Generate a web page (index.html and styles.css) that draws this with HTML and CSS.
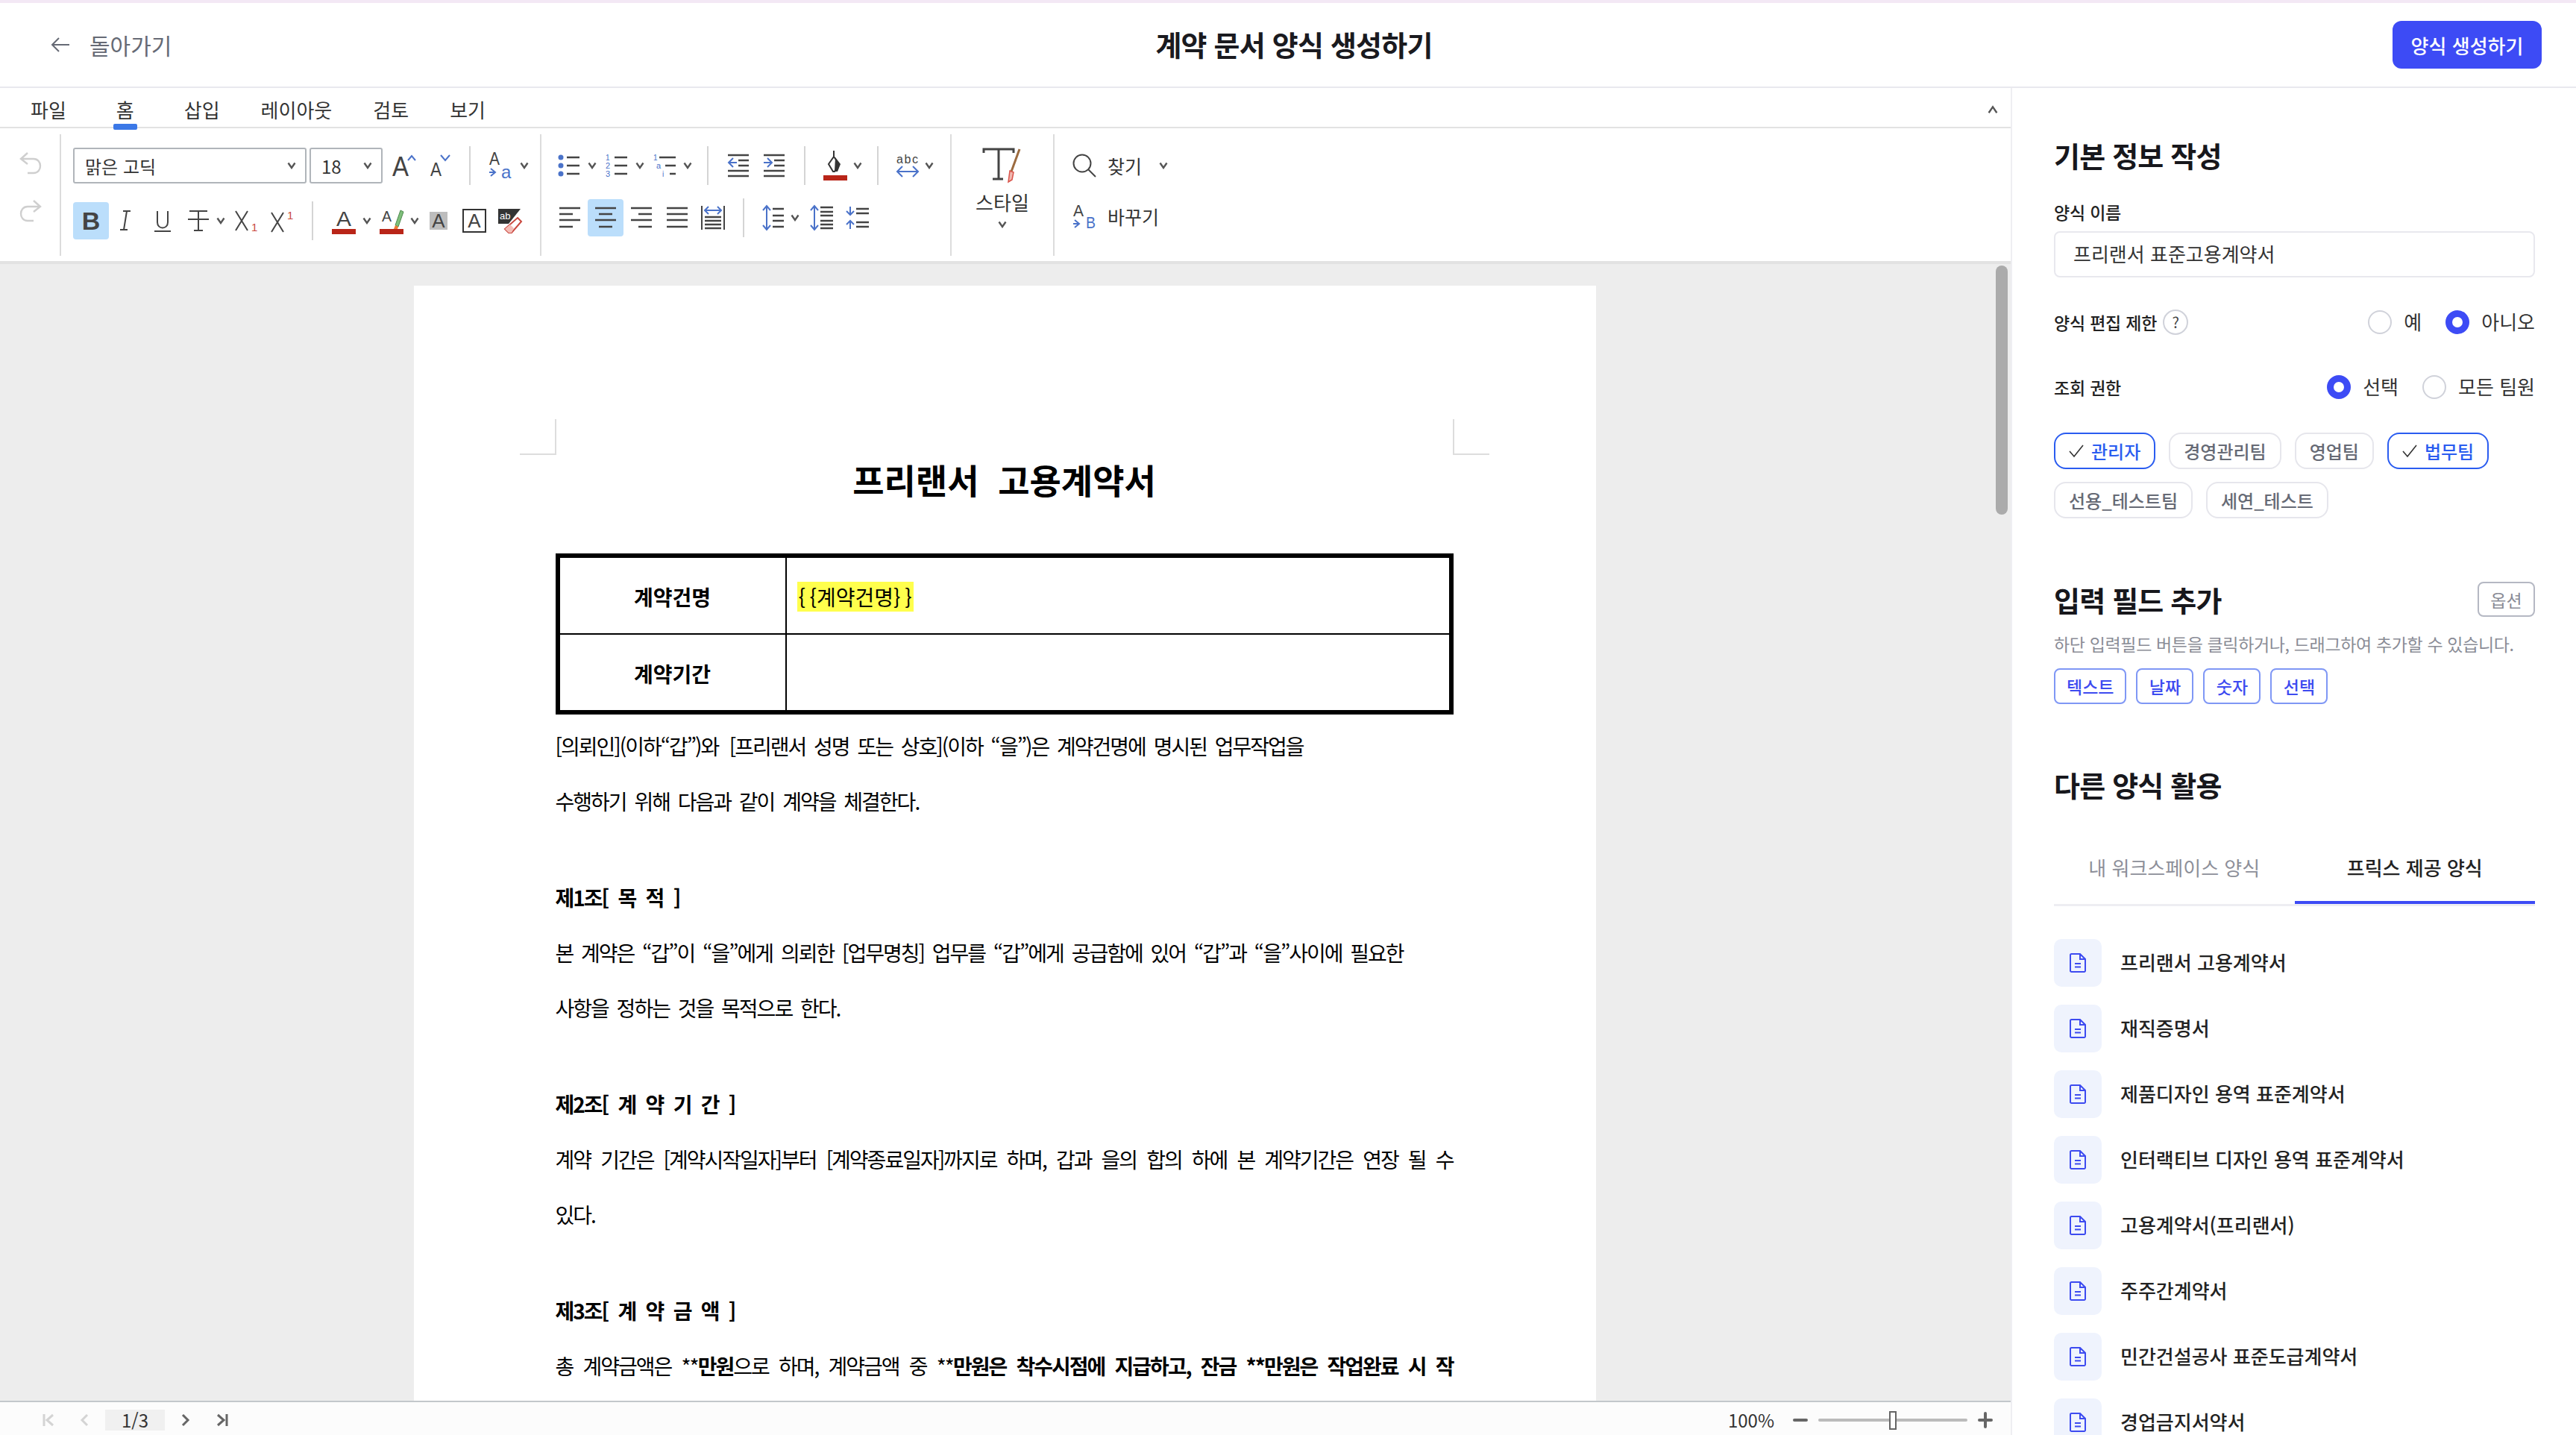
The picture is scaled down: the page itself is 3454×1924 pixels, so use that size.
FILE: index.html
```html
<!DOCTYPE html>
<html lang="ko">
	<head>
		<meta charset="utf-8">
		<title>계약 문서 양식 생성하기</title>
		<link rel="stylesheet" href="styles.css">
	</head>
	<body>
		<svg class="sprite" width="0" height="0">
			<symbol id="chev" viewBox="0 0 12 10"><path d="M1.5 1.5 6 8l4.5-6.5" fill="none" stroke="#555" stroke-width="2.4"/></symbol>
			<symbol id="doc" viewBox="0 0 22 26"><path d="M2.5 1H14l7 7v15.5a1.5 1.5 0 0 1-1.500 1.500H2.500A1.500 1.500 0 0 1 1 23.500V2.500A1.500 1.500 0 0 1 2.500 1ZM14 1v7h7M7 14h8M7 18.500h8" fill="none" stroke="#3d4bf0" stroke-width="2"/></symbol>
			<symbol id="check" viewBox="0 0 20 20"><path d="M1 10l6 7L19 2" fill="none" stroke="#333" stroke-width="1.600"/></symbol>
		</svg>

		<header class="top">
			<a class="back" href="#">
				<svg width="26" height="22" viewBox="0 0 26 22"><path d="M11 2 2 11l9 9M2 11h23" fill="none" stroke="#666a75" stroke-width="2"/></svg>
				<span>돌아가기</span>
			</a>
			<h1>계약 문서 양식 생성하기</h1>
			<div class="top-right"><button class="primary">양식 생성하기</button></div>
		</header>

		<div class="main">
			<div class="editor">
				<nav class="ribbon-tabs">
					<a href="#">파일</a>
					<a href="#" class="active">홈</a>
					<a href="#">삽입</a>
					<a href="#">레이아웃</a>
					<a href="#">검토</a>
					<a href="#">보기</a>
					<svg class="collapse" width="16" height="12" viewBox="0 0 12 10"><path d="M1.500 8.500 6 2l4.500 6.500" fill="none" stroke="#555" stroke-width="2"/></svg>
				</nav>

				<div class="toolbar">
					<div class="group group-history">
						<svg width="30" height="30" viewBox="0 0 30 30"><path d="M11 1 2 9l9 7M2 9h17c12 0 12 19 0 19h-8" fill="none" stroke="#cfcfcf" stroke-width="2.400"/></svg>
						<svg width="30" height="30" viewBox="0 0 30 30"><path d="M19 1l9 8-9 7M28 9H11C-1 9-1 28 11 28h8" fill="none" stroke="#cfcfcf" stroke-width="2.400"/></svg>
					</div>

					<div class="group group-font">
						<div class="row">
							<div class="select select-font"><span>맑은 고딕</span><svg width="12" height="10"><use href="#chev"/></svg></div>
							<div class="select select-size"><span>18</span><svg width="12" height="10"><use href="#chev"/></svg></div>
							<button class="btn"><svg width="32" height="32" viewBox="0 0 32 32"><text x="1" y="30" class="ico-a" font-size="36" textLength="22" lengthAdjust="spacingAndGlyphs">A</text><path d="M22 9l5-6 5 6" fill="none" stroke="#4a72c9" stroke-width="2"/></svg></button>
							<button class="btn"><svg width="32" height="32" viewBox="0 0 32 32"><text x="4" y="30" class="ico-a" font-size="25" textLength="15" lengthAdjust="spacingAndGlyphs">A</text><path d="M18 2l6 7 6-7" fill="none" stroke="#4a72c9" stroke-width="2"/></svg></button>
							<i class="sep"></i>
							<button class="btn split"><svg width="34" height="40" viewBox="0 0 34 40"><text x="1" y="19" class="ico-a" font-size="24" textLength="14" lengthAdjust="spacingAndGlyphs">A</text><text x="17" y="37" class="ico-blue" font-size="24">a</text><path d="M3 24l6 5-6 5M1 29h8" fill="none" stroke="#4a72c9" stroke-width="2"/></svg><svg width="12" height="10"><use href="#chev"/></svg></button>
						</div>
						<div class="row row-b">
							<button class="btn on"><b class="bold-b">B</b></button>
							<button class="btn"><svg width="32" height="32" viewBox="0 0 32 32"><path d="M11 3h10M16 3l-4 25M7 28h10" fill="none" stroke="#444" stroke-width="2"/></svg></button>
							<button class="btn"><svg width="32" height="32" viewBox="0 0 32 32"><path d="M9 3v15c0 10 14 10 14 0V3M5 30h22" fill="none" stroke="#444" stroke-width="2"/></svg></button>
							<button class="btn split"><svg width="32" height="32" viewBox="0 0 32 32"><path d="M4 3h24M16 3v26M2 14h28M10 29h12" fill="none" stroke="#444" stroke-width="2"/></svg><svg width="12" height="10"><use href="#chev"/></svg></button>
							<button class="btn"><svg width="32" height="32" viewBox="0 0 32 32"><path d="M2 3l16 26M18 3 2 29" fill="none" stroke="#444" stroke-width="2"/><text x="23" y="30" class="ico-red" font-size="15">1</text></svg></button>
							<button class="btn"><svg width="32" height="32" viewBox="0 0 32 32"><path d="M2 5l16 26M18 5 2 31" fill="none" stroke="#444" stroke-width="2"/><text x="23" y="14" class="ico-red" font-size="15">1</text></svg></button>
							<i class="sep"></i>
							<button class="btn split"><svg width="34" height="36" viewBox="0 0 34 36"><text x="7" y="25" class="ico-a" font-size="28" textLength="20" lengthAdjust="spacingAndGlyphs">A</text><rect x="1" y="29" width="32" height="7" fill="#b92518"/></svg><svg width="12" height="10"><use href="#chev"/></svg></button>
							<button class="btn split"><svg width="34" height="36" viewBox="0 0 34 36"><text x="4" y="19" class="ico-a" font-size="20" textLength="13" lengthAdjust="spacingAndGlyphs">A</text><path d="M22 24l7-20 4 2-7 20z" fill="#7fbf7b" stroke="#4d8a4d"/><path d="M20 29l2-5 4 2-1 3z" fill="#ee7a33"/><rect x="1" y="29" width="32" height="7" fill="#b92518"/></svg><svg width="12" height="10"><use href="#chev"/></svg></button>
							<button class="btn"><span class="shade-a">A</span></button>
							<button class="btn"><span class="box-a">A</span></button>
							<button class="btn"><svg width="32" height="32" viewBox="0 0 32 32"><path d="M0 0h30L14 20H0z" fill="#333"/><text x="2" y="14" class="ico-white" font-size="13">ab</text><path d="M26 12l5 5-13 15h-4l-5-5z" fill="#fff" stroke="#c9483f" stroke-width="2"/><path d="M16 21l5 5-3 6h-4l-5-5z" fill="#f3bcb6"/></svg></button>
						</div>
					</div>

					<div class="group group-para">
						<div class="row">
							<button class="btn split"><svg width="32" height="32" viewBox="0 0 32 32"><g fill="#4a72c9"><circle cx="4" cy="5" r="3.500"/><circle cx="4" cy="16" r="3.500"/><circle cx="4" cy="27" r="3.500"/></g><path d="M12 5h17M12 16h17M12 27h17" stroke="#444" stroke-width="2.400"/></svg><svg width="12" height="10"><use href="#chev"/></svg></button>
							<button class="btn split"><svg width="32" height="34" viewBox="0 0 32 34"><text x="0" y="10" class="ico-blue" font-size="10">1</text><text x="0" y="21" class="ico-blue" font-size="11">2</text><text x="0" y="32" class="ico-blue" font-size="11">3</text><path d="M12 6h17M12 17h17M12 28h17" stroke="#444" stroke-width="2.400"/></svg><svg width="12" height="10"><use href="#chev"/></svg></button>
							<button class="btn split"><svg width="32" height="34" viewBox="0 0 32 34"><text x="0" y="10" class="ico-blue" font-size="10">1</text><text x="4" y="21" class="ico-blue" font-size="11">a</text><text x="12" y="32" class="ico-blue" font-size="10">i</text><path d="M8 6h22M16 17h14M22 28h8" stroke="#444" stroke-width="2.400"/></svg><svg width="12" height="10"><use href="#chev"/></svg></button>
							<i class="sep"></i>
							<button class="btn"><svg width="30" height="32" viewBox="0 0 30 32"><path d="M1 2h28M1 30h28M1 23h28M15 9h14M15 16h14" stroke="#444" stroke-width="2.400"/><path d="M8 6l-6 6 6 6M2 12h11" fill="none" stroke="#4a72c9" stroke-width="2"/></svg></button>
							<button class="btn"><svg width="30" height="32" viewBox="0 0 30 32"><path d="M1 2h28M1 30h28M1 23h28M15 9h14M15 16h14" stroke="#444" stroke-width="2.400"/><path d="M6 6l6 6-6 6M1 12h11" fill="none" stroke="#4a72c9" stroke-width="2"/></svg></button>
							<i class="sep"></i>
							<button class="btn split"><svg width="32" height="40" viewBox="0 0 32 40"><path d="M14 0v9M14 8 7 18l6 10h2l6-10-7-10" fill="none" stroke="#333" stroke-width="2"/><path d="M16 9l7 9-4 10h-4z" fill="#333"/><rect y="33" width="32" height="7" fill="#b92518"/></svg><svg width="12" height="10"><use href="#chev"/></svg></button>
							<i class="sep"></i>
							<button class="btn split"><svg width="30" height="34" viewBox="0 0 30 34"><text x="0" y="14" class="ico-a" font-size="16" textLength="29">abc</text><path d="M1 25h28M8 18l-7 7 7 7M22 18l7 7-7 7" fill="none" stroke="#4a72c9" stroke-width="2"/></svg><svg width="12" height="10"><use href="#chev"/></svg></button>
						</div>
						<div class="row row-c">
							<button class="btn"><svg width="30" height="32" viewBox="0 0 30 32"><path d="M1 3h28M1 11h18M1 19h28M1 28h18" stroke="#444" stroke-width="2.400"/></svg></button>
							<button class="btn on"><svg width="30" height="32" viewBox="0 0 30 32"><path d="M1 3h28M6 11h18M1 19h28M6 28h18" stroke="#444" stroke-width="2.400"/></svg></button>
							<button class="btn"><svg width="30" height="32" viewBox="0 0 30 32"><path d="M1 3h28M11 11h18M1 19h28M11 28h18" stroke="#444" stroke-width="2.400"/></svg></button>
							<button class="btn"><svg width="30" height="32" viewBox="0 0 30 32"><path d="M1 3h28M1 11h28M1 19h28M1 28h28" stroke="#444" stroke-width="2.400"/></svg></button>
							<button class="btn"><svg width="32" height="32" viewBox="0 0 32 32"><path d="M1 0v32M31 0v32" stroke="#444" stroke-width="2"/><path d="M5 15h22M5 20h22M5 25h22M5 30h22" stroke="#444" stroke-width="2.400"/><path d="M5 6h22M10 1 5 6l5 5M22 1l5 5-5 5" fill="none" stroke="#4a72c9" stroke-width="2"/></svg></button>
							<i class="sep"></i>
							<button class="btn split"><svg width="30" height="34" viewBox="0 0 30 34"><path d="M14 5h15M14 14h15M14 21h15M14 29h15" stroke="#444" stroke-width="2.400"/><path d="M6 1v32M1 7l5-6 5 6M1 27l5 6 5-6" fill="none" stroke="#4a72c9" stroke-width="2"/></svg><svg width="12" height="10"><use href="#chev"/></svg></button>
							<button class="btn"><svg width="32" height="34" viewBox="0 0 32 34"><path d="M14 3h17M14 9h17M14 14h17M14 21h17M14 26h17M14 31h17" stroke="#444" stroke-width="2.400"/><path d="M6 1v32M1 7l5-6 5 6M1 27l5 6 5-6" fill="none" stroke="#4a72c9" stroke-width="2"/></svg></button>
							<button class="btn"><svg width="32" height="34" viewBox="0 0 32 34"><path d="M14 5h17M14 11h17M14 23h17M14 29h17" stroke="#444" stroke-width="2.400"/><path d="M6 2v11M1 8l5 5 5-5M6 32V21M1 26l5-5 5 5" fill="none" stroke="#4a72c9" stroke-width="2"/></svg></button>
						</div>
					</div>

					<div class="group group-style">
						<svg width="52" height="46" viewBox="0 0 52 46"><path d="M1 7V2h40v5M21 2v40M13 42h14" fill="none" stroke="#444" stroke-width="3"/><path d="M49 2 38 32" stroke="#9c6b3f" stroke-width="3" fill="none"/><path d="M36 31l5 2-2 10-5 3z" fill="#f0b8b0" stroke="#d9534a" stroke-width="1.500"/></svg>
						<span class="style-label">스타일</span>
						<svg width="12" height="10"><use href="#chev"/></svg>
					</div>

					<div class="group group-find">
						<div class="find-row">
							<svg width="32" height="32" viewBox="0 0 32 32"><circle cx="13" cy="13" r="11.500" fill="none" stroke="#444" stroke-width="2"/><path d="M21 21l10 10" stroke="#444" stroke-width="2"/></svg>
							<span>찾기</span>
							<svg class="find-chev" width="12" height="10"><use href="#chev"/></svg>
						</div>
						<div class="find-row">
							<svg width="32" height="34" viewBox="0 0 32 34"><text x="1" y="17" class="ico-a" font-size="22" textLength="14" lengthAdjust="spacingAndGlyphs">A</text><text x="18" y="33" class="ico-blue" font-size="22" textLength="13" lengthAdjust="spacingAndGlyphs">B</text><path d="M3 22l6 5-6 5M1 27h8" fill="none" stroke="#4a72c9" stroke-width="2"/></svg>
							<span>바꾸기</span>
						</div>
					</div>
				</div>

				<div class="workspace">
					<div class="page">
						<i class="crop crop-l"></i>
						<i class="crop crop-r"></i>
						<h2 class="doc-title">프리랜서&nbsp; 고용계약서</h2>
						<table class="doc-table">
							<tr>
								<th>계약건명</th>
								<td><mark>{&#8201;{계약건명}&#8201;}</mark></td>
							</tr>
							<tr>
								<th>계약기간</th>
								<td></td>
							</tr>
						</table>
						<p class="line">[의뢰인](이하“갑”)와&#8201; [프리랜서 성명 또는 상호](이하 “을”)은 계약건명에 명시된 업무작업을</p>
						<p class="line">수행하기 위해 다음과 같이 계약을 체결한다.</p>
						<p class="blank"></p>
						<p class="line heading">제1조[ 목 적 ]</p>
						<p class="line">본 계약은 “갑”이 “을”에게 의뢰한 [업무명칭] 업무를 “갑”에게 공급함에 있어 “갑”과 “을”사이에 필요한</p>
						<p class="line">사항을 정하는 것을 목적으로 한다.</p>
						<p class="blank"></p>
						<p class="line heading">제2조[ 계 약 기 간 ]</p>
						<p class="line fill">계약 기간은 [계약시작일자]부터 [계약종료일자]까지로 하며, 갑과 을의 합의 하에 본 계약기간은 연장 될 수</p>
						<p class="line">있다.</p>
						<p class="blank"></p>
						<p class="line heading">제3조[ 계 약 금 액 ]</p>
						<p class="line fill">총 계약금액은 **<b>만원</b>으로 하며, 계약금액 중 **<b>만원은 착수시점에 지급하고, 잔금 **만원은 작업완료 시 작</b></p>
					</div>
					<div class="scroll-thumb"></div>
				</div>

				<footer class="status">
					<div class="pager">
						<svg width="16" height="18" viewBox="0 0 16 18"><path d="M2 1v16M14 2 6 9l8 7" fill="none" stroke="#d4d4d4" stroke-width="3"/></svg>
						<svg class="pager-prev" width="12" height="18" viewBox="0 0 12 18"><path d="M10 2 3 9l7 7" fill="none" stroke="#d4d4d4" stroke-width="3"/></svg>
						<span class="page-no">1/3</span>
						<svg class="pager-next" width="12" height="18" viewBox="0 0 12 18"><path d="M2 2l7 7-7 7" fill="none" stroke="#666" stroke-width="3"/></svg>
						<svg class="pager-last" width="16" height="18" viewBox="0 0 16 18"><path d="M2 2l8 7-8 7M14 1v16" fill="none" stroke="#666" stroke-width="3"/></svg>
					</div>
					<div class="zoom">
						<span>100%</span>
						<svg class="zoom-minus" width="20" height="6" viewBox="0 0 20 6"><path d="M2 3h16" stroke="#666" stroke-width="4" stroke-linecap="round"/></svg>
						<div class="slider"><i class="thumb"></i></div>
						<svg width="20" height="22" viewBox="0 0 20 22"><path d="M2 11h16M10 2v18" stroke="#666" stroke-width="4" stroke-linecap="round"/></svg>
					</div>
				</footer>
			</div>

			<aside class="panel">
				<h3>기본 정보 작성</h3>
				<label class="field-label">양식 이름</label>
				<div class="input">프리랜서 표준고용계약서</div>

				<div class="option-row first">
					<span class="field-label">양식 편집 제한 <em class="help">?</em></span>
					<div class="radios">
						<i class="radio"></i><span>예</span>
						<i class="radio on"></i><span>아니오</span>
					</div>
				</div>
				<div class="option-row second">
					<span class="field-label">조회 권한</span>
					<div class="radios">
						<i class="radio on"></i><span>선택</span>
						<i class="radio"></i><span>모든 팀원</span>
					</div>
				</div>

				<div class="chips">
					<span class="chip on"><svg width="20" height="20"><use href="#check"/></svg>관리자</span>
					<span class="chip">경영관리팀</span>
					<span class="chip">영업팀</span>
					<span class="chip on"><svg width="20" height="20"><use href="#check"/></svg>법무팀</span>
					<span class="chip">선용_테스트팀</span>
					<span class="chip">세연_테스트</span>
				</div>

				<div class="section-head">
					<h3>입력 필드 추가</h3>
					<button class="small">옵션</button>
				</div>
				<p class="hint">하단 입력필드 버튼을 클릭하거나, 드래그하여 추가할 수 있습니다.</p>
				<div class="field-btns">
					<button>텍스트</button>
					<button>날짜</button>
					<button>숫자</button>
					<button>선택</button>
				</div>

				<h3 class="other">다른 양식 활용</h3>
				<div class="panel-tabs">
					<a href="#">내 워크스페이스 양식</a>
					<a href="#" class="active">프릭스 제공 양식</a>
				</div>
				<ul class="forms">
					<li><span class="form-ico"><svg width="22" height="26"><use href="#doc"/></svg></span><span class="form-name">프리랜서 고용계약서</span></li>
					<li><span class="form-ico"><svg width="22" height="26"><use href="#doc"/></svg></span><span class="form-name">재직증명서</span></li>
					<li><span class="form-ico"><svg width="22" height="26"><use href="#doc"/></svg></span><span class="form-name">제품디자인 용역 표준계약서</span></li>
					<li><span class="form-ico"><svg width="22" height="26"><use href="#doc"/></svg></span><span class="form-name">인터랙티브 디자인 용역 표준계약서</span></li>
					<li><span class="form-ico"><svg width="22" height="26"><use href="#doc"/></svg></span><span class="form-name">고용계약서(프리랜서)</span></li>
					<li><span class="form-ico"><svg width="22" height="26"><use href="#doc"/></svg></span><span class="form-name">주주간계약서</span></li>
					<li><span class="form-ico"><svg width="22" height="26"><use href="#doc"/></svg></span><span class="form-name">민간건설공사 표준도급계약서</span></li>
					<li><span class="form-ico"><svg width="22" height="26"><use href="#doc"/></svg></span><span class="form-name">경업금지서약서</span></li>
				</ul>
			</aside>
		</div>
	</body>
</html>
```

FILE: styles.css
```css
* {
	box-sizing: border-box;
}

html, body {
	height: 100%;
}

body {
	margin: 0;
	display: flex;
	flex-direction: column;
	overflow: hidden;
	border-top: 4px solid #f3e8f5;
	background: #fff;
	color: #222;
	font-family: "Noto Sans CJK KR", "Noto Sans", sans-serif;
}

button {
	font-family: inherit;
	cursor: pointer;
}

svg {
	flex: none;
	display: block;
	overflow: visible;
}

.sprite {
	position: absolute;
}

/* top bar */
.top {
	flex: none;
	height: 114px;
	display: grid;
	grid-template-columns: 1fr auto 1fr;
	align-items: center;
	padding: 0 46px 0 68px;
	border-bottom: 2px solid #e9e9ee;
}

.back {
	display: flex;
	align-items: center;
	gap: 26px;
	color: #666a75;
	font-size: 30px;
	text-decoration: none;
}

.top h1 {
	margin: 0;
	padding-right: 6px;
	color: #1a1a1f;
	font-size: 38px;
	font-weight: 700;
	letter-spacing: -0.8px;
	transform: translateY(-2px);
}

.top-right {
	display: flex;
	justify-content: flex-end;
}

.primary {
	width: 200px;
	height: 64px;
	border: 0;
	border-radius: 12px;
	background: #3d4bf5;
	color: #fff;
	font-size: 26px;
	font-weight: 500;
}

.main {
	flex: 1;
	min-height: 0;
	display: flex;
}

.editor {
	flex: 1;
	min-width: 0;
	display: flex;
	flex-direction: column;
}

/* ribbon */
.ribbon-tabs {
	flex: none;
	height: 54px;
	display: flex;
	align-items: center;
	gap: 55px;
	padding: 6px 0 0 41px;
	border-bottom: 2px solid #e2e2e2;
}

.ribbon-tabs a {
	position: relative;
	color: #333;
	font-size: 26px;
	line-height: 36px;
	text-decoration: none;
}

.ribbon-tabs a.active {
	margin: 0 12px;
}

.ribbon-tabs a.active::after {
	content: "";
	position: absolute;
	left: -4px;
	right: -4px;
	bottom: -9px;
	height: 8px;
	border-radius: 2px;
	background: #3b78e7;
}

.collapse {
	margin-left: auto;
	margin-right: 16px;
}

.toolbar {
	flex: none;
	height: 182px;
	display: flex;
	padding: 8px 0 7px;
	border-bottom: 4px solid #e2e2e2;
}

.group {
	flex: none;
	border-right: 2px solid #dcdcdc;
}

.group-history {
	width: 82px;
	padding: 24px 0 0 26px;
	display: flex;
	flex-direction: column;
	gap: 34px;
}

.group-font {
	width: 644px;
	padding: 18px 0 0 16px;
}

.group-para {
	width: 550px;
	padding: 18px 0 0 14px;
}

.group-style {
	width: 138px;
	display: flex;
	flex-direction: column;
	align-items: center;
	padding-top: 18px;
}

.group-find {
	padding: 24px 0 0 24px;
	border-right: 0;
}

.row {
	display: flex;
	align-items: center;
	height: 48px;
}

.row-b {
	margin-top: 25px;
	height: 50px;
}

.row-c {
	margin-top: 21px;
	height: 50px;
}

.select {
	height: 48px;
	display: flex;
	align-items: center;
	justify-content: space-between;
	margin-right: 4px;
	padding: 0 12px 0 14px;
	border: 2px solid #b0b5ba;
	border-radius: 3px;
	color: #333;
	font-size: 24px;
}

.select-font {
	width: 313px;
}

.select-size {
	width: 98px;
}

.btn {
	flex: none;
	width: 48px;
	height: 50px;
	display: flex;
	align-items: center;
	justify-content: center;
	padding: 0;
	border: 0;
	border-radius: 4px;
	background: none;
}

.btn.split {
	width: 64px;
	justify-content: flex-start;
	padding-left: 8px;
}

.btn.split svg + svg {
	margin-left: 8px;
}

.btn.on {
	background: #bbdefb;
}

.sep {
	flex: none;
	width: 2px;
	height: 52px;
	margin: 0 16px;
	background: #d4d4d4;
}

.ico-a {
	fill: #444;
	font-family: "Liberation Sans", sans-serif;
}

.ico-blue {
	fill: #4a72c9;
	font-family: "Liberation Sans", sans-serif;
}

.ico-red {
	fill: #c9483f;
	font-family: "Liberation Sans", sans-serif;
}

.ico-white {
	fill: #fff;
	font-family: "Liberation Sans", sans-serif;
}

.bold-b {
	color: #444;
	font-family: "Liberation Sans", sans-serif;
	font-size: 34px;
	font-weight: 700;
}

.shade-a {
	width: 24px;
	background: #bdbdbd;
	color: #444;
	font-family: "Liberation Sans", sans-serif;
	font-size: 26px;
	line-height: 24px;
	text-align: center;
}

.box-a {
	width: 32px;
	height: 32px;
	border: 2px solid #333;
	color: #444;
	font-family: "Liberation Sans", sans-serif;
	font-size: 26px;
	line-height: 28px;
	text-align: center;
}

.style-label {
	margin: 9px 0 7px;
	color: #333;
	font-size: 26px;
	line-height: 36px;
}

.find-row {
	display: flex;
	align-items: center;
	gap: 15px;
	height: 36px;
	color: #333;
	font-size: 25px;
}

.find-row + .find-row {
	margin-top: 32px;
}

.find-chev {
	margin-left: 8px;
}

/* document */
.workspace {
	flex: 1;
	min-height: 0;
	position: relative;
	overflow: hidden;
	background: #ededed;
	padding: 29px 2px 0 0;
}

.page {
	position: relative;
	width: 1585px;
	height: 2242px;
	margin: 0 auto;
	padding: 222px 191px 0 190px;
	background: #fff;
	color: #000;
	font-size: 28px;
}

.crop {
	position: absolute;
	top: 179px;
	width: 49px;
	height: 48px;
}

.crop-l {
	left: 142px;
	border-right: 2px solid #ddd;
	border-bottom: 2px solid #ddd;
}

.crop-r {
	left: 1393px;
	border-left: 2px solid #ddd;
	border-bottom: 2px solid #ddd;
}

.doc-title {
	margin: 0;
	font-size: 46px;
	font-weight: 700;
	line-height: 74px;
	text-align: center;
}

.doc-table {
	width: 1204px;
	height: 216px;
	margin-top: 63px;
	border-collapse: collapse;
	border: 6px solid #000;
}

.doc-table th, .doc-table td {
	border: 2px solid #000;
	padding: 3px 14px 0;
	font-size: 28px;
}

.doc-table td {
	border-left-width: 1px;
}

.doc-table th {
	width: 306px;
}

mark {
	display: inline-block;
	padding: 0 2px;
	background: #ffff4d;
	line-height: 40px;
}

.line {
	height: 74px;
	margin: 0;
	line-height: 74px;
	letter-spacing: -2px;
	word-spacing: 5px;
	white-space: nowrap;
}

.doc-table + .line {
	margin-top: 5px;
}

.line.heading {
	font-weight: 700;
	word-spacing: 7.5px;
}

.line.fill {
	white-space: normal;
	text-align: justify;
	text-align-last: justify;
}

.blank {
	margin: 0;
	height: 55px;
}

.scroll-thumb {
	position: absolute;
	top: 2px;
	right: 4px;
	width: 16px;
	height: 334px;
	border-radius: 8px;
	background: #ababab;
}

.status {
	flex: none;
	height: 46px;
	display: flex;
	align-items: center;
	justify-content: space-between;
	padding: 3px 24px 0 57px;
	border-top: 2px solid #c3c7cb;
	background: #fcfcfc;
	color: #333;
	font-size: 24px;
}

.pager, .zoom {
	display: flex;
	align-items: center;
}

.pager-prev {
	margin-left: 34px;
}

.page-no {
	width: 80px;
	height: 28px;
	margin: 0 22px;
	background: #f0f0f0;
	line-height: 28px;
	text-align: center;
}

.pager-last {
	margin-left: 35px;
}

.zoom-minus {
	margin: 0 14px 0 25px;
}

.slider {
	position: relative;
	width: 200px;
	height: 4px;
	margin-right: 14px;
	background: #bbb;
	border-radius: 2px;
}

.thumb {
	position: absolute;
	left: 95px;
	top: -10px;
	width: 10px;
	height: 25px;
	border: 2px solid #666;
	background: #fff;
}

/* side panel */
.panel {
	flex: none;
	width: 758px;
	overflow: hidden;
	padding: 66px 55px 0 56px;
	border-left: 2px solid #eeeef2;
}

.panel h3 {
	margin: 0;
	color: #17171c;
	font-size: 38px;
	font-weight: 700;
	letter-spacing: -0.8px;
	line-height: 48px;
}

.field-label {
	display: flex;
	align-items: center;
	gap: 8px;
	color: #222;
	font-size: 23px;
	font-weight: 500;
	letter-spacing: -0.2px;
	line-height: 32px;
}

.panel > label.field-label {
	margin-top: 36px;
}

.input {
	height: 62px;
	margin-top: 10px;
	padding: 0 24px;
	border: 2px solid #e8e8ee;
	border-radius: 8px;
	color: #333;
	font-size: 26px;
	line-height: 56px;
}

.help {
	width: 34px;
	height: 34px;
	border: 2px solid #d0d2da;
	border-radius: 50%;
	color: #444;
	font-size: 20px;
	font-style: normal;
	font-weight: 400;
	line-height: 30px;
	text-align: center;
}

.option-row {
	display: flex;
	align-items: center;
	justify-content: space-between;
	height: 36px;
}

.option-row.first {
	margin-top: 42px;
}

.option-row.second {
	margin-top: 51px;
}

.radios {
	display: flex;
	align-items: center;
	color: #333;
	font-size: 26px;
}

.radios span {
	position: relative;
	top: -2px;
}

.radio {
	width: 32px;
	height: 32px;
	margin: 0 16px 0 32px;
	border: 2px solid #d0d2da;
	border-radius: 50%;
}

.radio.on {
	border: 9px solid #3d4bf5;
}

.chips {
	display: flex;
	flex-wrap: wrap;
	gap: 17px 18px;
	margin-top: 43px;
}

.chip {
	height: 49px;
	display: flex;
	align-items: center;
	gap: 10px;
	padding: 0 18px;
	border: 2px solid #e6e6ec;
	border-radius: 16px;
	color: #666a75;
	font-size: 24px;
	font-weight: 500;
}

.chip.on {
	border-color: #2a5cf0;
	color: #2a5cf0;
}

.section-head {
	display: flex;
	align-items: center;
	justify-content: space-between;
	height: 47px;
	margin-top: 85px;
}

.small {
	width: 77px;
	height: 47px;
	padding: 0;
	border: 2px solid #b5b8c3;
	border-radius: 8px;
	background: #fff;
	color: #8a8c96;
	font-size: 23px;
}

.hint {
	margin: 20px 0 0;
	color: #8a8c96;
	font-size: 23px;
	letter-spacing: -0.35px;
	line-height: 32px;
}

.field-btns {
	display: flex;
	gap: 13px;
	margin-top: 17px;
}

.field-btns button {
	height: 48px;
	min-width: 77px;
	padding: 0 15px;
	border: 2px solid #7f97f5;
	border-radius: 8px;
	background: #fff;
	color: #3d4bf0;
	font-size: 23px;
	font-weight: 500;
}

.panel h3.other {
	margin-top: 84px;
}

.panel-tabs {
	display: flex;
	margin-top: 39px;
	border-bottom: 3px solid #eeeef2;
}

.panel-tabs a {
	flex: 1;
	height: 97px;
	color: #8d8f99;
	font-size: 26px;
	line-height: 96px;
	text-align: center;
	text-decoration: none;
}

.panel-tabs a.active {
	color: #222;
	font-weight: 500;
	border-bottom: 4px solid #3d4bf5;
}

.forms {
	list-style: none;
	margin: 44px 0 0;
	padding: 0;
}

.forms li {
	display: flex;
	align-items: center;
	gap: 25px;
	margin-bottom: 24px;
	color: #222;
	font-size: 26px;
	font-weight: 500;
}

.form-name {
	margin-bottom: 3px;
}

.form-ico {
	flex: none;
	width: 64px;
	height: 64px;
	display: flex;
	align-items: center;
	justify-content: center;
	border-radius: 10px;
	background: #eff3fd;
}
```
